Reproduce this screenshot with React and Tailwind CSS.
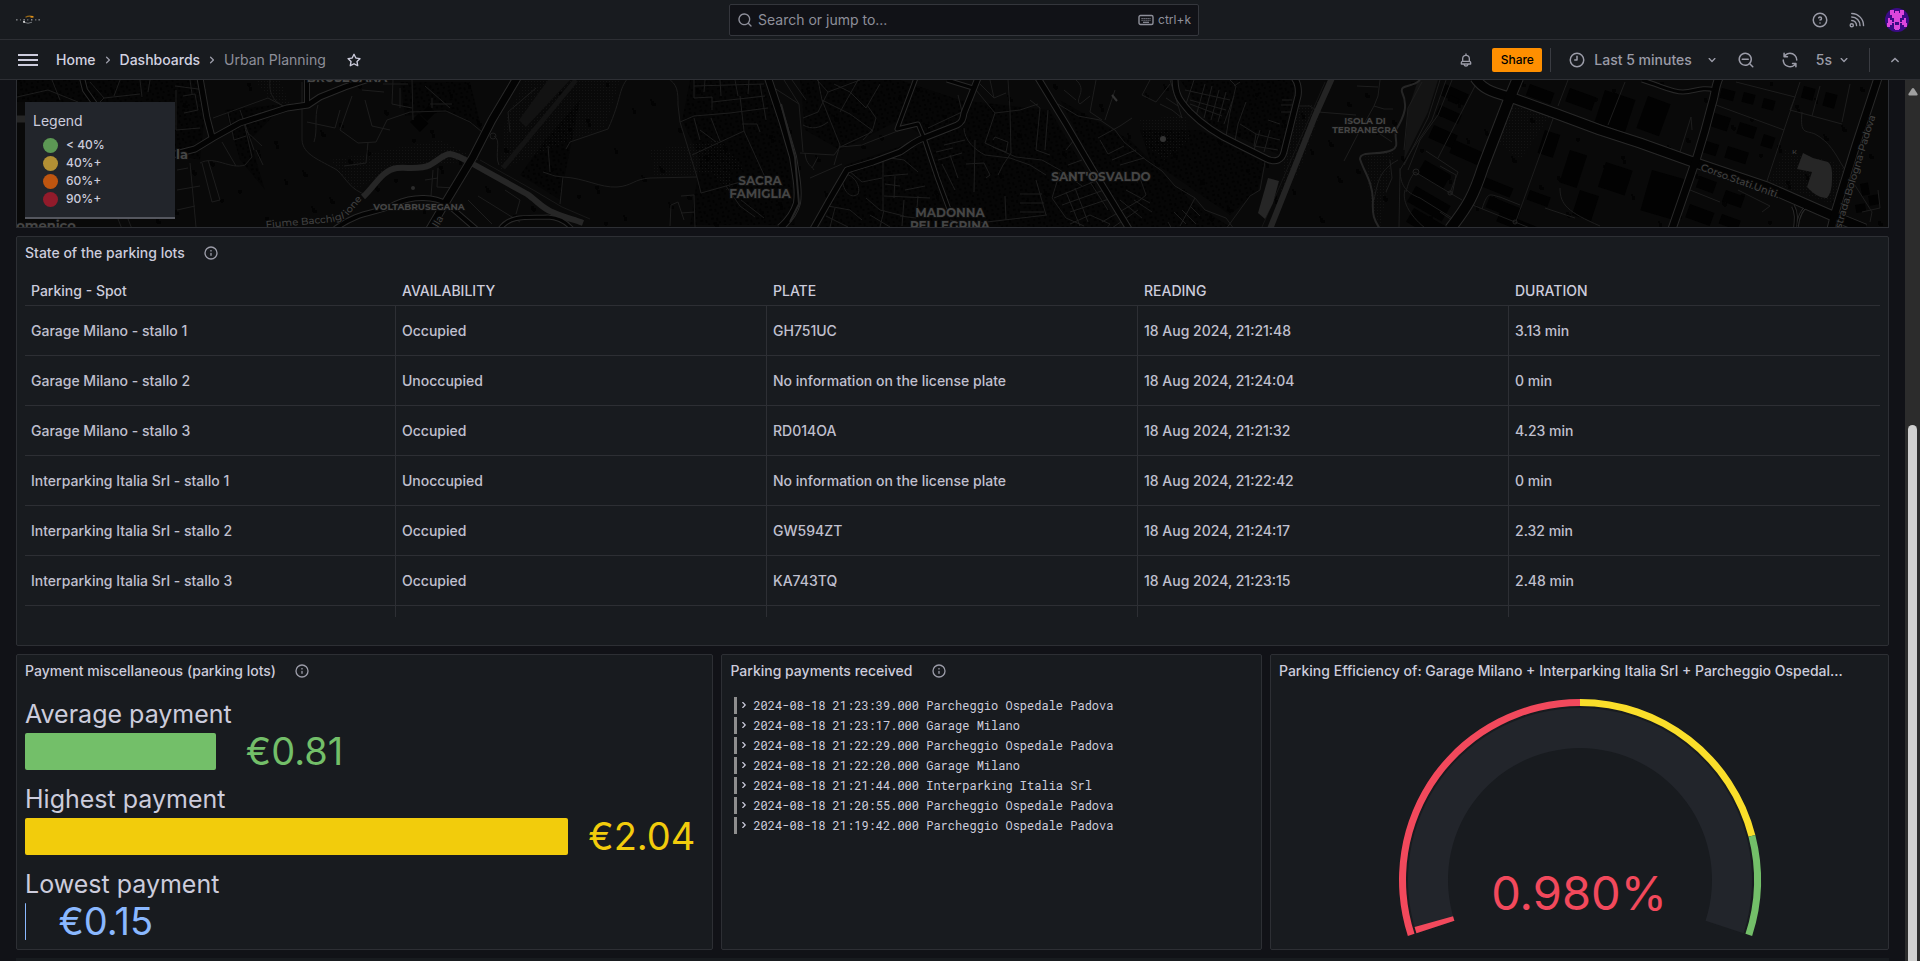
import React from "react";

const ICONS = {
  search:
    "M21.71,20.29,18,16.61A9,9,0,1,0,16.61,18l3.68,3.68a1,1,0,0,0,1.42,0A1,1,0,0,0,21.71,20.29ZM11,18a7,7,0,1,1,7-7A7,7,0,0,1,11,18Z",
  zoomOut:
    "M21.71,20.29,18,16.61A9,9,0,1,0,16.61,18l3.68,3.68a1,1,0,0,0,1.42,0A1,1,0,0,0,21.71,20.29ZM11,18a7,7,0,1,1,7-7A7,7,0,0,1,11,18ZM15,10H7a1,1,0,0,0,0,2h8a1,1,0,0,0,0-2Z",
  star: "M22,9.67A1,1,0,0,0,21.14,9l-5.69-.83L12.9,3a1,1,0,0,0-1.8,0L8.55,8.16,2.86,9a1,1,0,0,0-.81.68,1,1,0,0,0,.25,1l4.13,4-1,5.68A1,1,0,0,0,6.9,21.44L12,18.77l5.1,2.67a.93.93,0,0,0,.46.12,1,1,0,0,0,.59-.19,1,1,0,0,0,.4-1l-1-5.68,4.13-4A1,1,0,0,0,22,9.67Zm-6.15,4a1,1,0,0,0-.29.88l.72,4.2-3.76-2a1.06,1.06,0,0,0-.94,0l-3.76,2,.72-4.2a1,1,0,0,0-.29-.88l-3-3,4.21-.61a1,1,0,0,0,.76-.55L12,5.7l1.88,3.82a1,1,0,0,0,.76.55l4.21.61Z",
  bell: "M18,13.18V10a6,6,0,0,0-5-5.91V3a1,1,0,0,0-2,0V4.09A6,6,0,0,0,6,10v3.18A3,3,0,0,0,4,16v2a1,1,0,0,0,1,1H8.14a4,4,0,0,0,7.72,0H19a1,1,0,0,0,1-1V16A3,3,0,0,0,18,13.18ZM8,10a4,4,0,0,1,8,0v3H8Zm4,10a2,2,0,0,1-1.72-1h3.44A2,2,0,0,1,12,20Zm6-3H6V16a1,1,0,0,1,1-1H17a1,1,0,0,1,1,1Z",
  down: "M17,9.17a1,1,0,0,0-1.41,0L12,12.71,8.46,9.17a1,1,0,0,0-1.41,0,1,1,0,0,0,0,1.42l4.24,4.24a1,1,0,0,0,1.42,0L17,10.59A1,1,0,0,0,17,9.17Z",
  right:
    "M14.83,11.29,10.59,7.05a1,1,0,0,0-1.42,0,1,1,0,0,0,0,1.41L12.71,12,9.17,15.54a1,1,0,0,0,0,1.41,1,1,0,0,0,.71.29,1,1,0,0,0,.71-.29l4.24-4.24A1,1,0,0,0,14.83,11.29Z",
  up: "M17,13.41,12.71,9.17a1,1,0,0,0-1.42,0L7.05,13.41a1,1,0,0,0,0,1.42,1,1,0,0,0,1.41,0L12,11.29l3.54,3.54a1,1,0,0,0,.7.29,1,1,0,0,0,.71-.29A1,1,0,0,0,17,13.41Z",
  sync: "M19.91,15.51H15.38a1,1,0,0,0,0,2h2.4A8,8,0,0,1,4,12a1,1,0,1,0-2,0,10,10,0,0,0,16.88,7.23V21a1,1,0,0,0,2,0V16.5A1,1,0,0,0,19.91,15.51ZM12,2A10,10,0,0,0,5.12,4.77V3a1,1,0,0,0-2,0V7.5a1,1,0,0,0,1,1h4.5a1,1,0,0,0,0-2H6.22A8,8,0,0,1,20,12a1,1,0,0,0,2,0A10,10,0,0,0,12,2Z",
  clock:
    "M12,2A10,10,0,1,0,22,12,10,10,0,0,0,12,2Zm0,18a8,8,0,1,1,8-8A8,8,0,0,1,12,20ZM12,6a1,1,0,0,0-1,1v4H9a1,1,0,0,0,0,2h3a1,1,0,0,0,1-1V7A1,1,0,0,0,12,6Z",
  info: "M12,2A10,10,0,1,0,22,12,10,10,0,0,0,12,2Zm0,18a8,8,0,1,1,8-8A8,8,0,0,1,12,20Zm0-8.5a1,1,0,0,0-1,1v3a1,1,0,0,0,2,0v-3A1,1,0,0,0,12,11.5Zm0-4a1.25,1.25,0,1,0,1.25,1.25A1.25,1.25,0,0,0,12,7.5Z",
  help: "M11.29,15.29a1.58,1.58,0,0,0-.12.15.76.76,0,0,0-.09.18.64.64,0,0,0-.06.18,1.36,1.36,0,0,0,0,.2.84.84,0,0,0,.08.38.9.9,0,0,0,.54.54.94.94,0,0,0,.76,0,.9.9,0,0,0,.54-.54A1,1,0,0,0,13,16a1,1,0,0,0-.29-.71A1,1,0,0,0,11.29,15.29ZM12,2A10,10,0,1,0,22,12,10,10,0,0,0,12,2Zm0,18a8,8,0,1,1,8-8A8,8,0,0,1,12,20ZM12,7A3,3,0,0,0,9.4,8.5a1,1,0,1,0,1.73,1A1,1,0,0,1,12,9a1,1,0,0,1,0,2,1,1,0,1,0,0,2,3,3,0,0,0,0-6Z",
};

function Icon({ name, className = "size-[18px]" }) {
  return (
    <svg viewBox="0 0 24 24" fill="currentColor" aria-hidden="true" className={`shrink-0 ${className}`}>
      <path d={ICONS[name]} />
    </svg>
  );
}

function RssIcon() {
  return (
    <svg viewBox="0 0 24 24" fill="none" stroke="currentColor" strokeWidth="1.9" strokeLinecap="round" aria-hidden="true" className="size-[18px]">
      <circle cx="5" cy="19" r="2.1" />
      <path d="M5 12.6A6.6 6.6 0 0 1 11.4 19.5M5 8A11.2 11.2 0 0 1 16 19.5M5 3.4A15.8 15.8 0 0 1 20.7 19.5" />
    </svg>
  );
}

function KeyboardIcon() {
  return (
    <svg viewBox="0 0 16 12" fill="none" stroke="currentColor" aria-hidden="true" className="h-3 w-4">
      <rect x="1" y="1.5" width="14" height="9" rx="1.5" strokeWidth="1.4" />
      <path d="M3.5 4.5h9M3.5 6.3h9" strokeWidth="1.1" strokeDasharray="1.2 .8" />
      <path d="M5 8.3h6" strokeWidth="1.2" />
    </svg>
  );
}

function Logo() {
  return (
    <svg viewBox="0 0 24 10" aria-hidden="true" className="h-[10px] w-6">
      <path d="M9.5 2.2Q13 .4 17 1.6" fill="none" stroke="#9a6a18" strokeWidth="1.1" />
      <path d="M14.5 1.9h3" stroke="#f09a1a" strokeWidth="1.4" />
      <path d="M8 7.2Q12 9.4 16 7.2" fill="none" stroke="#74777b" strokeWidth="1" />
      <rect x="7" y="6.2" width="2" height="1.4" fill="#f2f2f2" />
      <g fill="#85888c">
        <rect x="0" y="4" width="1.6" height="1.6" opacity=".8" />
        <rect x="4" y="4" width="1" height="1.6" opacity=".6" />
        <rect x="7.4" y="4" width="1.5" height="1.6" />
        <rect x="11" y="4" width="1.4" height="1.6" opacity=".6" />
        <rect x="15" y="4" width="1.4" height="1.6" />
        <rect x="19" y="4" width="1.4" height="1.6" opacity=".6" />
        <rect x="22.4" y="4" width="1.6" height="1.6" opacity=".8" />
      </g>
    </svg>
  );
}

const AVATAR = [
  "..##....##..",
  "..##.##.##..",
  "..########..",
  "...######...",
  "...######...",
  ".#..####..#.",
  ".##.####.##.",
  ".####..####.",
  "###.#..#.###",
  "##..####..##",
  "....####....",
  ".....##.....",
];

function Avatar() {
  return (
    <svg viewBox="-1 -1 14 14" role="img" aria-label="Profile" className="size-6 rounded-full bg-[#3b0a85]" shapeRendering="crispEdges">
      {AVATAR.map((row, y) =>
        [...row].map((c, x) => (c === "#" ? <rect key={`${x}-${y}`} x={x} y={y} width="1" height="1" fill="#dc46dc" /> : null))
      )}
    </svg>
  );
}

function TopBar() {
  return (
    <header className="grid h-10 shrink-0 grid-cols-[1fr_470px_1fr] items-center border-b border-[#2d2f34] bg-[#181b1f] pr-2 pl-4">
      <a href="#home" aria-label="Home">
        <Logo />
      </a>
      <div className="flex h-8 items-center gap-1 rounded-xs border border-[#34363c] bg-[#111217] px-[7px] text-[#8e8f9a]">
        <Icon name="search" className="size-4" />
        <input
          type="text"
          aria-label="Search or jump to"
          placeholder="Search or jump to..."
          className="min-w-0 flex-1 bg-transparent pl-px text-sm outline-none placeholder:text-[#8e8f9a]"
        />
        <KeyboardIcon />
        <kbd className="font-[Inter,sans-serif] text-xs">ctrl+k</kbd>
      </div>
      <div className="flex items-center justify-end gap-[19px] pr-[3px] text-[#9b9ca8]">
        <button aria-label="Help">
          <Icon name="help" />
        </button>
        <button aria-label="News">
          <RssIcon />
        </button>
        <button aria-label="Profile">
          <Avatar />
        </button>
      </div>
    </header>
  );
}

function NavBar() {
  return (
    <div className="flex h-10 shrink-0 items-center justify-between border-b border-[#2d2f34] bg-[#181b1f] pr-4 pl-[18px] text-sm">
      <div className="flex items-center">
        <button aria-label="Open menu" className="flex w-5 flex-col gap-[3px]">
          <span className="h-0.5 bg-[#ccccdc]" />
          <span className="h-0.5 bg-[#ccccdc]" />
          <span className="h-0.5 bg-[#ccccdc]" />
        </button>
        <nav aria-label="Breadcrumbs" className="ml-[18px] flex items-center gap-1 text-[#d2d2e0]">
          <a href="#home" className="font-medium">Home</a>
          <Icon name="right" className="size-4 text-[#9b9ca8]" />
          <a href="#dashboards" className="font-medium">Dashboards</a>
          <Icon name="right" className="size-4 text-[#9b9ca8]" />
          <span className="text-[#8e8f9a]">Urban Planning</span>
        </nav>
        <button aria-label="Mark as favorite" className="ml-5 text-[#ccccdc]">
          <Icon name="star" className="size-4" />
        </button>
      </div>
      <div className="flex items-center font-medium text-[#9b9ca8]">
        <button aria-label="Alerts">
          <Icon name="bell" className="size-4" />
        </button>
        <button className="ml-[18px] h-6 w-[50px] rounded-xs bg-[#ff8f00] text-xs text-black">Share</button>
        <span className="ml-2 h-6 w-px bg-[#3a3c42]" />
        <button className="ml-[17px] flex items-center gap-2">
          <Icon name="clock" />
          Last 5 minutes
          <Icon name="down" className="ml-1 size-4" />
        </button>
        <button aria-label="Zoom out" className="ml-[17px]">
          <Icon name="zoomOut" />
        </button>
        <button aria-label="Refresh" className="ml-[26px]">
          <Icon name="sync" />
        </button>
        <button className="ml-[17px] flex items-center gap-1">
          5s
          <Icon name="down" className="size-4" />
        </button>
        <span className="ml-[17px] h-6 w-px bg-[#3a3c42]" />
        <button aria-label="Collapse toolbar" className="ml-4">
          <Icon name="up" />
        </button>
      </div>
    </div>
  );
}

/* ---------- Map ---------- */

const MAJOR = [
  ["M200,78 L207,118 L212,137", 7],
  ["M372,78 L345,87 L320,97 L308,105 L287,108 L240,123 L213,138 L195,149 L172,155", 7],
  ["M82,78 L85,90 L95,104", 6],
  ["M307,78 L307,104", 6],
  ["M517,78 L492,120 L473,157 L447,200 L430,229", 9],
  ["M335,229 C360,210 378,214 395,204 C415,195 435,197 447,204 L476,229", 6],
  ["M500,229 C510,214 530,218 548,217 C562,218 568,224 572,229", 5],
  ["M768,78 L783,123 L793,157 C796,175 799,190 797,203 C794,214 788,221 780,228", 8],
  ["M813,229 L830,199 L847,170 L873,162 L900,152 C910,146 914,141 924,138 L957,125 C963,122 963,118 964,113 L978,78", 7],
  ["M916,78 L897,129 L918,124 L924,138 L937,177 L950,212", 5],
  ["M947,80 L973,88", 5],
  ["M1038,78 L1066,124 L1093,170 L1129,229", 7],
  ["M1175,78 C1175,95 1180,101 1190,112 C1205,127 1220,136 1235,143 L1267,159 C1276,163 1282,160 1284,152 L1298,96 C1299,90 1298,82 1294,78", 7],
  ["M1475,78 C1482,88 1490,92 1510,97 L1557,114 L1600,130 L1640,143 L1693,162 L1767,187 L1833,216 L1865,229", 11],
  ["M1518,78 L1510,97 L1483,167 C1474,195 1468,206 1450,229", 12],
  ["M1719,78 C1715,86 1715,95 1712,104 C1708,120 1704,135 1697,157 L1672,229", 9],
  ["M1642,80 C1662,86 1672,92 1683,92 C1695,92 1700,86 1715,90", 5],
  ["M1878,78 L1856,145 L1835,213 L1831,229", 9],
  ["M1793,206 C1797,213 1796,220 1795,229", 4],
  ["M1808,206 C1800,210 1798,220 1797,229", 3],
];

const MINOR = [
  "M17,97 L48,90 L78,102 M52,80 L60,100 M90,82 L104,98 L140,94 M104,98 L98,104 M120,80 L114,96",
  "M140,80 L142,97 M150,80 L148,92 M175,86 L206,90 M176,90 L176,130 L200,128 M183,96 L195,94 L198,110 L184,113 M190,80 L192,94",
  "M213,118 L268,98 L287,108 M228,113 L234,140 L246,136 M240,110 L254,150 M222,142 L236,166 M200,163 C215,155 230,170 245,165 L252,157 L243,118 M245,130 L262,146 M256,150 L263,165",
  "M202,163 L212,202 L220,200 L208,160 M177,190 L200,186 M190,163 L196,227 M177,170 L188,168 M177,210 L195,206 M128,219 L132,229 M118,219 L122,229",
  "M270,80 C268,100 280,104 287,108 M307,122 L335,128 L340,110 M318,105 C314,118 318,130 314,142 M352,96 L340,130 L358,143 L376,142 L387,120 L410,112 L446,111 L470,122 L482,132",
  "M412,80 L413,120 M393,80 L392,104 L412,108 M383,84 L408,84 M365,100 L372,126 L390,130 M362,90 L384,92 M368,142 L366,163 L344,166 M400,88 L400,108 M425,86 L450,108 M430,104 L452,104 M432,98 L432,108",
  "M302,82 L302,140 C303,155 320,160 337,170 C346,178 350,190 367,195",
  "M438,168 L437,187 L455,188 L462,172 M425,180 L438,178 M433,170 L431,196 M468,200 L492,224 M478,196 L520,222 M505,190 L520,200 L516,214",
  "M628,78 C618,90 622,98 608,129 L570,142 L566,149 M543,172 L555,176 L563,177 C585,178 600,188 617,187 C632,186 634,179 650,178 L697,177",
  "M667,78 C678,84 678,92 678,105 L680,122 L697,177 L701,193 M563,177 L560,204 M548,146 L550,172 M494,136 C502,140 494,155 499,165 M510,132 L508,112 L536,88",
  "M680,122 L694,116 L730,113 L768,108 M694,80 L694,98 L712,97 L712,110 M705,80 L704,92 M720,80 L721,96 M735,80 L738,96 M749,80 L748,94 M694,86 L764,84 M712,102 L765,96 M740,96 L744,131 L764,175 M744,131 L692,155 M694,118 L700,140 M700,130 L716,142",
  "M711,118 L720,141 M742,124 L757,124 L760,132 M760,84 L766,120 M701,193 L726,186 L748,180 M726,186 L740,206 L755,217 M741,200 L764,218 M681,196 L694,195 L695,227 M670,226 L671,205 L678,202 L684,220 M681,213 L695,212",
  "M784,80 L799,104 L803,152 M799,104 L768,84 M792,80 L806,100 M803,118 L818,112 L828,92 L817,80 M803,125 C812,130 820,128 828,122 M818,80 L822,100 L840,145 L834,165 M822,100 L850,114 L872,130 L863,140 M834,84 L850,92 L866,108 L880,84 M828,92 L860,80 M840,112 L858,80 M867,105 L876,118 L872,132 L840,147 L862,145 C874,140 880,138 900,130",
  "M800,153 L834,155 L840,147 M805,153 C806,165 812,166 814,170 M818,157 L812,168 M810,178 L842,164",
  "M928,128 L962,112 L958,95 M976,90 L995,113 L1020,110 L1038,104 M995,113 L985,143 L1000,150 L1016,157 L1042,160 L1060,170 L1082,186 M1008,80 L1010,110 M980,84 L994,98 L1006,93 M990,80 L994,98 M1010,110 L1011,153 L1003,165 L998,175",
  "M964,128 C964,140 975,150 985,155 L1010,158 L1030,165 L1046,175 M975,140 L974,192 M966,164 L984,163 L990,175 L986,178 M944,145 L965,140 M936,152 L953,148 M938,160 L962,153 M942,164 L955,190 M950,155 L958,178 M993,140 L995,137 L1008,142 L1006,152 L993,147 M1030,100 L1040,108 L1036,150 L1050,155 M1048,110 L1045,150",
  "M842,176 C850,170 862,185 858,194 C850,200 842,190 842,176 M848,170 L862,182 L882,178 M883,155 L883,210 M890,158 L904,160 L918,172 M884,176 L908,174 M885,184 L900,186 M884,196 L930,198 M895,176 L894,198 M905,190 L925,186 M866,198 L880,210 L904,216 M828,206 L850,210 L862,220 M826,216 L848,227 M835,208 L830,227 M870,215 L890,227 M884,210 L880,227 M904,200 L902,226 M918,196 L916,218 L900,216",
  "M950,220 L970,224 L1004,220 L1047,215 M1005,196 L1006,220 M1020,194 L1042,194 M1020,203 L1044,203 M1020,212 L1044,212 M1036,180 L1046,215",
  "M1058,104 L1078,116 L1100,120 L1115,130 L1124,142 L1146,160 L1162,171 L1175,186 L1195,198 L1205,210 L1226,218 L1234,229",
  "M1076,80 C1088,90 1074,100 1080,104 L1090,96 M1096,80 L1090,112 L1102,120 M1115,90 L1105,120 M1064,90 L1076,100 M1098,138 L1120,126 L1132,118 M1100,140 L1108,154 L1124,146 M1112,160 L1136,150 M1120,165 L1144,158 M1066,150 L1074,140 M1082,160 L1068,165",
  "M1150,80 L1142,95 L1156,102 L1170,84 M1160,104 L1172,110 L1182,118 L1170,80 M1166,98 L1178,106",
  "M1060,172 L1052,198 L1066,218 L1084,226 M1054,198 L1098,180 M1062,205 L1104,190 M1070,212 L1112,198 M1075,188 L1088,222 M1090,182 L1108,210 M1066,192 L1080,226 M1102,222 L1140,200 L1146,195 L1140,178 M1112,228 L1138,210 M1126,190 L1150,203 M1134,200 L1152,212 M1120,200 L1142,218 M1116,175 L1138,182 M1070,224 L1090,215 L1110,224 L1106,229",
  "M1195,198 L1180,226 M1190,206 L1200,216 M1182,210 L1196,224 M1174,212 L1186,224 M1168,222 L1172,229 M1265,162 L1260,190 L1250,196 L1226,229 M1264,158 L1270,162",
  "M1185,90 L1230,100 M1194,80 L1186,104 M1205,84 L1196,116 M1212,86 L1204,118 M1219,90 L1211,120 M1226,92 L1218,122 M1234,96 L1224,124 M1190,100 L1226,110 M1190,104 L1222,116 M1230,80 L1236,86 L1230,112 L1226,136 M1240,82 L1234,86 M1246,102 L1238,124 L1234,146 M1240,124 L1256,134 L1280,140 M1260,130 L1254,150 M1268,120 L1280,124 M1282,100 L1292,100 M1281,105 L1293,105 M1281,112 L1291,112 M1270,130 L1264,152 M1256,134 L1254,146 L1278,150",
  "M1299,106 L1310,106 L1318,112 L1356,115 M1380,80 L1378,96 L1374,106 L1384,109 L1393,109 M1374,106 L1364,124 M1357,86 L1378,87 M1358,134 L1344,161 M1380,134 L1392,142",
  "M1422,82 L1408,108 L1404,150 M1446,80 L1432,120 L1412,150 L1400,170 L1399,227 M1440,80 L1428,118 L1404,165 M1452,80 L1438,115 L1420,140 L1408,170 M1398,160 C1380,170 1378,180 1374,200 M1390,160 L1392,178 L1386,192",
  "M1400,168 C1400,185 1405,192 1420,198 L1452,218 M1405,190 C1402,200 1408,214 1425,228 M1476,84 L1438,158 M1426,151 L1458,172 L1450,193 L1415,172 C1410,178 1408,184 1406,192 M1450,193 L1462,200",
  "M1554,116 L1516,221 M1470,204 L1515,222 L1530,228 M1482,209 C1488,190 1490,195 1500,197 L1520,205 M1560,188 C1560,205 1568,212 1600,226 M1545,208 L1575,218 M1568,80 L1558,106 M1625,82 L1608,125",
  "M1691,117 L1680,152 M1691,117 L1692,130 M1716,105 L1784,130 M1736,82 L1795,97 L1790,110 L1842,124 M1800,82 L1766,184 M1820,86 L1812,116 M1850,84 L1842,122 M1802,112 C1800,135 1805,130 1815,134 C1830,142 1836,155 1842,165 L1858,190 L1872,212 L1870,222 M1862,212 L1880,208 L1878,190 M1690,190 L1720,202 M1738,190 L1770,206 L1762,212 M1440,212 L1455,222 M1440,166 L1456,175 L1452,195",
];

const DARK_BLOCKS = [
  "17,80 200,80 205,115 200,160 175,155 175,102 17,102",
  "225,110 285,104 250,140 265,190 240,160",
  "400,82 470,82 482,130 450,112 405,116",
  "545,140 580,100 560,200 520,175",
  "690,80 770,80 790,160 795,225 690,225 700,160 682,120",
  "800,80 900,80 960,100 1050,110 1085,170 1120,227 820,227 845,165 925,138 900,120 840,150 805,130",
  "1060,100 1130,140 1190,200 1230,227 1130,227 1095,170",
  "1180,80 1296,80 1280,155 1210,125",
  "1140,130 1200,130 1265,162 1258,190 1230,215 1150,160",
];

const LOTS = [
  [1445, 84, 26, 12, 24], [1440, 105, 24, 10, 24], [1434, 125, 26, 14, 24], [1455, 140, 32, 14, 24], [1425, 160, 30, 16, 30],
  [1416, 186, 40, 18, 30], [1414, 208, 36, 16, 30], [1480, 175, 36, 10, 22], [1490, 196, 34, 12, 22], [1500, 212, 40, 10, 22],
  [1530, 84, 26, 12, 20], [1570, 88, 28, 14, 20], [1605, 90, 32, 34, 18], [1648, 96, 24, 34, 20], [1545, 130, 16, 24, 18],
  [1570, 150, 18, 34, 18], [1606, 162, 28, 26, 18], [1580, 190, 20, 26, 18], [1652, 170, 34, 42, 16], [1530, 190, 22, 10, 20],
  [1722, 88, 14, 10, 15], [1744, 92, 12, 10, 15], [1764, 98, 12, 10, 15], [1712, 112, 20, 14, 18], [1740, 122, 18, 12, 18],
  [1764, 134, 12, 12, 18], [1704, 140, 16, 12, 18], [1728, 146, 22, 12, 18], [1804, 86, 12, 12, 15], [1826, 92, 12, 14, 15],
  [1700, 176, 18, 12, 20], [1726, 190, 20, 12, 20], [1690, 204, 26, 14, 20], [1722, 214, 20, 10, 20], [1450, 95, 10, 6, 24],
  [1860, 184, 8, 12, -10], [1868, 196, 10, 10, -10], [1855, 205, 10, 8, -10], [410, 122, 12, 14, -45], [420, 114, 12, 10, -45],
];

const LOT_DOTS = Array.from({ length: 520 }, (_, i) => {
  const x = 20 + ((i * 733) % 1860);
  const y = 82 + ((i * 97 + Math.floor(i / 7) * 31) % 143);
  return `M${x},${y}h${2 + (i % 3)}v${2 + ((i * 5) % 3)}h-${2 + (i % 3)}z`;
}).join("");

const LABELS = [
  ["BRUSEGANA", 347, 82, 12],
  ["VOLTABRUSEGANA", 419, 210, 9],
  ["SACRA", 760, 185, 12],
  ["FAMIGLIA", 760, 198, 12],
  ["MADONNA", 950, 217, 12],
  ["PELLEGRINA", 950, 230, 12],
  ["SANT'OSVALDO", 1101, 181, 12],
  ["ISOLA DI", 1365, 124, 9],
  ["TERRANEGRA", 1365, 133, 9],
];

function CityMap() {
  return (
    <svg
      viewBox="17 80 1871 147"
      preserveAspectRatio="xMidYMid slice"
      role="img"
      aria-label="Map of parking lots"
      className="block h-full w-full bg-[#090909] font-[Montserrat,Inter,sans-serif]"
    >
      <defs>
        <pattern id="houses" width="11" height="9" patternUnits="userSpaceOnUse" patternTransform="rotate(-12)">
          <rect width="11" height="9" fill="#060606" />
          <path d="M1 1h3v2h-3zM6 2h2v3h-2zM2 6h2v2h-2zM8 6h2v2h-2z" fill="#020202" />
        </pattern>
        <pattern id="park" width="3" height="3" patternUnits="userSpaceOnUse">
          <rect x="0" y="0" width="1" height="1" fill="#131313" />
        </pattern>
      </defs>
      {DARK_BLOCKS.map((p) => (
        <polygon key={p} points={p} fill="url(#houses)" />
      ))}
      <g fill="url(#park)">
        <polygon points="525,80 620,80 605,128 570,140 500,170 505,120" />
        <polygon points="255,80 280,80 290,105 270,100" />
        <polygon points="330,160 440,140 480,160 430,165 390,170 355,190" />
        <polygon points="650,150 720,140 745,170 655,178" />
        <polygon points="1140,120 1185,115 1190,140 1165,160 1145,145" />
        <polygon points="1290,110 1325,100 1300,170 1280,200" />
        <polygon points="1508,104 1550,116 1520,160 1495,140" />
        <polygon points="1785,150 1845,165 1835,205 1768,182" />
        <polygon points="700,150 728,165 735,200 700,160" />
        <polygon points="1365,155 1395,150 1380,227 1370,200" />
      </g>
      <path d={LOT_DOTS} fill="#010101" opacity=".7" />
      <polygon points="548,80 570,80 526,127 519,120" fill="#121212" />
      <path d="M576,80 L503,168" stroke="#131313" strokeWidth="5" />
      <polygon points="1418,80 1438,80 1428,112 1404,160 1408,110" fill="#141414" />
      {LOTS.map(([x, y, w, h, a]) => (
        <rect key={`${x}-${y}`} x={x} y={y} width={w} height={h} fill="#020202" transform={`rotate(${a} ${x} ${y})`} />
      ))}
      <g fill="none" strokeLinejoin="round">
        <path d={MINOR.join(" ")} stroke="#1d1d1d" strokeWidth="1" />
        <path d="M363,197 C375,186 382,170 397,168 C408,167 420,170 430,165 C440,159 444,154 450,154 C458,155 465,160 473,164 L527,194 C536,200 542,208 552,212 C562,217 572,219 583,223" stroke="#262626" strokeWidth="6" />
        <path d="M480,160 L535,191 L562,207 L590,219" stroke="#181818" strokeWidth="1" />
        <path d="M17,119 L25,119" stroke="#262626" strokeWidth="7" />
        <path d="M1332,78 L1315,116 L1270,229" stroke="#242424" strokeWidth="6" />
        <path d="M1325,82 L1262,227" stroke="#161616" strokeWidth="1" />
        <path d="M1420,80 C1412,88 1400,84 1402,92 C1408,105 1405,115 1396,130 C1394,140 1400,146 1392,150 C1380,156 1360,150 1360,159 C1364,172 1372,180 1373,200 C1372,215 1374,220 1380,229" stroke="#262626" strokeWidth="2" />
        {MAJOR.map(([d, w]) => (
          <path key={d} d={d} stroke="#292929" strokeWidth={w} />
        ))}
        {MAJOR.map(([d, w]) => (
          <path key={d} d={d} stroke="#030303" strokeWidth={w - 2} />
        ))}
        <path d="M781,104 L795,157 L799,204 L790,222" stroke="#262626" strokeWidth="2" />
        <path d="M1112,95 L1117,101" stroke="#333" strokeWidth="2" />
        <circle cx="1416" cy="172" r="3" stroke="#222" />
        <circle cx="1450" cy="193" r="2" stroke="#222" />
        <circle cx="1515" cy="222" r="2" stroke="#222" />
        <circle cx="493" cy="136" r="3" stroke="#1e1e1e" />
      </g>
      <g fill="#262626">
        <path d="M1803,153 L1813,158 L1828,162 Q1833,165 1832,180 Q1832,192 1827,198 Q1818,199 1807,187 L1812,172 L1797,169 Z" />
        <polygon points="1268,178 1279,181 1273,203 1265,219 1258,213" />
        <circle cx="1163" cy="139" r="3" fill="#333" />
        <circle cx="413" cy="188" r="2" fill="#2c2c2c" />
      </g>
      <g fill="#454545" fontWeight="700" textAnchor="middle" stroke="#0d0d0d" strokeWidth="2" paintOrder="stroke">
        {LABELS.map(([text, x, y, size]) => (
          <text key={text} x={x} y={y} fontSize={size}>
            {text}
          </text>
        ))}
        <text x="182" y="159" fontSize="13">la</text>
        <text x="46" y="230" fontSize="13">omenico</text>
      </g>
      <g fill="#404040" fontWeight="500" fontSize="10" stroke="#090909" strokeWidth="2" paintOrder="stroke">
        <text transform="translate(1700 170) rotate(20)">Corso.Stati.Uniti.</text>
        <text transform="translate(1841 229) rotate(-73)">strada.Bologna-Padova</text>
        <text transform="translate(266 228) rotate(-5)">Fiume Bacch</text>
        <text transform="translate(333 222) rotate(-16)">igl</text>
        <text transform="translate(348 216) rotate(-50)">ione</text>
        <text transform="translate(438 228) rotate(-60)">lla</text>
        <text transform="translate(1792 154)" fontSize="8">к</text>
      </g>
    </svg>
  );
}

const LEGEND = [
  ["< 40%", "bg-[#5c9854]"],
  ["40%+", "bg-[#b39034]"],
  ["60%+", "bg-[#be5510]"],
  ["90%+", "bg-[#921b2b]"],
];

function MapPanel() {
  return (
    <section className="relative h-[148px] border border-t-0 border-[#2d2f34]">
      <CityMap />
      <div className="absolute top-[22px] left-2 w-[150px] border-b-2 border-[#55575f] bg-[#22252b] px-2 pt-2 pb-[9px] text-[#ccccdc]">
        <h3 className="text-sm leading-[22px]">Legend</h3>
        <ul className="pt-1 pl-[10px] text-xs font-medium">
          {LEGEND.map(([label, color]) => (
            <li key={label} className="flex h-[18px] items-center gap-2 leading-[18px]">
              <span className={`size-[15px] rounded-full ${color}`} />
              {label}
            </li>
          ))}
        </ul>
      </div>
    </section>
  );
}

/* ---------- Panels ---------- */

function Panel({ title, info, className = "", children }) {
  return (
    <section className={`flex min-w-0 flex-col rounded-xs border border-[#2d2f34] bg-[#181b1f] ${className}`}>
      <header className="flex h-8 shrink-0 items-center gap-[18px] px-2 text-[#ccccdc]">
        <h2 className="truncate text-sm font-medium">{title}</h2>
        {info && (
          <button aria-label="Description" className="text-[#9b9ca8]">
            <Icon name="info" className="size-4" />
          </button>
        )}
      </header>
      {children}
    </section>
  );
}

const COLUMNS = ["Parking - Spot", "AVAILABILITY", "PLATE", "READING", "DURATION"];
const ROWS = [
  ["Garage Milano - stallo 1", "Occupied", "GH751UC", "18 Aug 2024, 21:21:48", "3.13 min"],
  ["Garage Milano - stallo 2", "Unoccupied", "No information on the license plate", "18 Aug 2024, 21:24:04", "0 min"],
  ["Garage Milano - stallo 3", "Occupied", "RD014OA", "18 Aug 2024, 21:21:32", "4.23 min"],
  ["Interparking Italia Srl - stallo 1", "Unoccupied", "No information on the license plate", "18 Aug 2024, 21:22:42", "0 min"],
  ["Interparking Italia Srl - stallo 2", "Occupied", "GW594ZT", "18 Aug 2024, 21:24:17", "2.32 min"],
  ["Interparking Italia Srl - stallo 3", "Occupied", "KA743TQ", "18 Aug 2024, 21:23:15", "2.48 min"],
];

function LotsPanel() {
  return (
    <Panel title="State of the parking lots" info>
      <div className="px-2 pt-2 pb-[28px]">
        <table className="w-full table-fixed border-separate border-spacing-0 text-left text-sm font-medium text-[#c0c0cf]">
          <thead>
            <tr>
              {COLUMNS.map((c) => (
                <th key={c} className="h-[29px] border-b border-[#2d2f34] px-1.5 py-0 font-medium text-[#ccccdc]">
                  {c}
                </th>
              ))}
            </tr>
          </thead>
          <tbody>
            {ROWS.map((row) => (
              <tr key={row[0]}>
                {row.map((cell, i) => (
                  <td key={COLUMNS[i]} className="h-[50px] border-r border-b border-[#2d2f34] px-1.5 py-0 last:border-r-0">
                    {cell}
                  </td>
                ))}
              </tr>
            ))}
            <tr aria-hidden="true">
              {COLUMNS.map((c) => (
                <td key={c} className="h-[11px] border-r border-[#2d2f34] p-0 last:border-r-0" />
              ))}
            </tr>
          </tbody>
        </table>
      </div>
    </Panel>
  );
}

const PAYMENTS = [
  { label: "Average payment", value: "€0.81", share: 0.352, bar: "bg-[#73bf69]", text: "text-[#73bf69]" },
  { label: "Highest payment", value: "€2.04", share: 1, bar: "bg-[#f2cc0c]", text: "text-[#f2cc0c]" },
  { label: "Lowest payment", value: "€0.15", share: 0, bar: "bg-[#8ab8ff]", text: "text-[#8ab8ff]" },
];

function PaymentsPanel() {
  return (
    <Panel title="Payment miscellaneous (parking lots)" info className="col-span-9">
      <div className="flex flex-col gap-[10px] px-2 pt-2 pb-2">
        {PAYMENTS.map((p) => (
          <div key={p.label}>
            <div className="h-[38px] text-[25px] leading-[38px] text-[#ccccdc]">{p.label}</div>
            <div className="flex h-[37px] items-center">
              <div
                className={`h-full min-w-px rounded-xs ${p.bar}`}
                style={{ width: `calc((100% - 136px) * ${p.share})` }}
              />
              <div className={`w-[127px] text-right text-[38px] leading-[37px] ${p.text}`}>{p.value}</div>
            </div>
          </div>
        ))}
      </div>
    </Panel>
  );
}

const LOGS = [
  ["2024-08-18 21:23:39.000", "Parcheggio Ospedale Padova"],
  ["2024-08-18 21:23:17.000", "Garage Milano"],
  ["2024-08-18 21:22:29.000", "Parcheggio Ospedale Padova"],
  ["2024-08-18 21:22:20.000", "Garage Milano"],
  ["2024-08-18 21:21:44.000", "Interparking Italia Srl"],
  ["2024-08-18 21:20:55.000", "Parcheggio Ospedale Padova"],
  ["2024-08-18 21:19:42.000", "Parcheggio Ospedale Padova"],
];

function LogsPanel() {
  return (
    <Panel title="Parking payments received" info className="col-span-7">
      <ul className="px-3 pt-2 font-['Roboto_Mono','DejaVu_Sans_Mono',monospace] text-xs text-[#ccccdc]">
        {LOGS.map(([time, place]) => (
          <li key={time} className="flex h-5 items-center">
            <span className="h-[17px] w-[3px] bg-[#8e8e8e]" />
            <button aria-label="Show details" className="mr-0.5">
              <Icon name="right" className="size-[14px]" />
            </button>
            {time} {place}
          </li>
        ))}
      </ul>
    </Panel>
  );
}

const CX = 190;
const CY = 186;
const point = (r, fraction) => {
  const a = ((-198 + 216 * fraction) * Math.PI) / 180;
  return `${(CX + r * Math.cos(a)).toFixed(2)} ${(CY + r * Math.sin(a)).toFixed(2)}`;
};
const ring = (outer, inner, from, to) => {
  const large = (to - from) * 216 > 180 ? 1 : 0;
  return `M${point(outer, from)}A${outer} ${outer} 0 ${large} 1 ${point(outer, to)}L${point(inner, to)}A${inner} ${inner} 0 ${large} 0 ${point(inner, from)}Z`;
};

function GaugePanel() {
  return (
    <Panel title="Parking Efficiency of: Garage Milano + Interparking Italia Srl + Parcheggio Ospedal..." className="col-span-8">
      <div className="flex justify-center pt-[7px]">
        <svg viewBox="0 0 380 248" role="img" aria-label="Parking efficiency" className="h-[248px] w-[380px]">
          <path d={ring(172, 132, 0, 1)} fill="#22252b" />
          <path d={ring(172, 132, 0, 0.0098)} fill="#f2495c" />
          <path d={ring(181, 174, 0, 0.5)} fill="#f2495c" />
          <path d={ring(181, 174, 0.5, 0.85)} fill="#fade2a" />
          <path d={ring(181, 174, 0.85, 1)} fill="#73bf69" />
          <text x={CX - 1} y="216" textAnchor="middle" fontSize="47" fill="#f2495c">
            0.980%
          </text>
        </svg>
      </div>
    </Panel>
  );
}

function Scrollbar() {
  return (
    <div aria-hidden="true" className="flex w-[15px] shrink-0 flex-col items-center bg-[#2c2c2c] pt-2">
      <svg viewBox="0 0 10 8" className="h-2 w-[10px]">
        <path d="M4 .6Q5-.4 6 .6L9.6 6Q9.8 7.5 8.6 7.6H1.4Q.2 7.5.4 6Z" fill="#a0a0a0" />
      </svg>
      <div className="flex w-full flex-1 flex-col items-center">
        <div className="grow-[329]" />
        <div className="w-[9px] grow-[536] rounded-t-full bg-[#d0d0d0]" />
      </div>
    </div>
  );
}

export default function App() {
  return (
    <div className="flex h-screen flex-col overflow-hidden bg-[#111217] font-[Inter,'Liberation_Sans',sans-serif] text-[#ccccdc]">
      <TopBar />
      <NavBar />
      <div className="flex min-h-0 flex-1">
        <main className="flex min-w-0 flex-1 flex-col gap-2 overflow-hidden px-4">
          <div className="shrink-0">
            <MapPanel />
          </div>
          <div className="shrink-0">
            <LotsPanel />
          </div>
          <div className="grid h-[296px] shrink-0 grid-cols-24 gap-2">
            <PaymentsPanel />
            <LogsPanel />
            <GaugePanel />
          </div>
          <div className="h-8 shrink-0 bg-[#181b1f]" />
        </main>
        <Scrollbar />
      </div>
    </div>
  );
}
